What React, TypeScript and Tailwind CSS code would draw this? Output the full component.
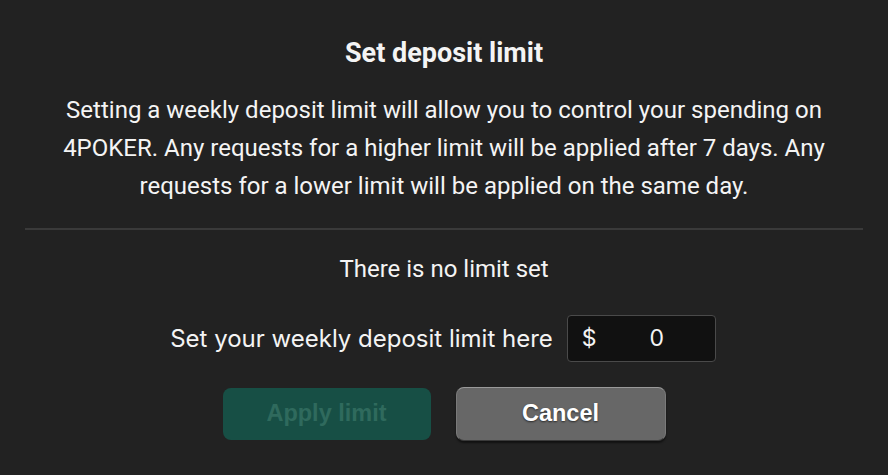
import { useState } from "react";

const DepositLimit = () => {
    const [amount, setAmount] = useState("0");

    return (
        <div className="w-full h-[475px] bg-[#222222] text-[#f4f4f4] flex flex-col items-center px-[25px] pt-[36px]">
            <h1 className="font-['Roboto',sans-serif] font-bold text-[27px] leading-[34px]">
                Set deposit limit
            </h1>
            <p className="mt-[21px] w-full px-[2px] text-center font-['Roboto',sans-serif] text-[24px] leading-[38px]">
                Setting a weekly deposit limit will allow you to control your spending on
                4POKER. Any requests for a higher limit will be applied after 7 days. Any
                requests for a lower limit will be applied on the same day.
            </p>
            <div className="mt-[23px] w-full h-[2px] bg-[#3a3a3a]" />
            <div className="mt-[25px] font-['Roboto',sans-serif] text-[24px] leading-[28px]">
                There is no limit set
            </div>
            <div className="mt-[32px] flex items-center gap-[14px] font-['Inter',sans-serif] -ml-[2px]">
                <label className="text-[24px]">Set your weekly deposit limit here</label>
                <div className="w-[149px] h-[47px] bg-[#111111] border border-[#4a4a4a] rounded-[4px] flex items-center px-[14px] text-[23px]">
                    <span>$</span>
                    <input
                        value={amount}
                        onChange={(e) => setAmount(e.target.value)}
                        className="w-[60px] ml-[53px] bg-transparent outline-none text-[#f4f4f4]"
                    />
                </div>
            </div>
            <div className="mt-[25px] flex gap-[25px] font-['Liberation_Sans',Arial,sans-serif] font-bold text-[23.5px]">
                <button
                    disabled
                    className="mt-[1px] w-[208px] h-[52px] rounded-[8px] bg-[#174f45] text-[#2f6a5d]"
                >
                    Apply limit
                </button>
                <button className="w-[210px] h-[54px] rounded-[8px] bg-[#676767] text-white border border-t-[#9a9a9a] border-x-[#7a7a7a] border-b-[#3a3a3a] shadow-[0_2px_2px_rgba(0,0,0,0.5)] [text-shadow:0_1px_2px_rgba(0,0,0,0.6)]">
                    Cancel
                </button>
            </div>
        </div>
    );
};

export default function App() {
    return <DepositLimit />;
}
